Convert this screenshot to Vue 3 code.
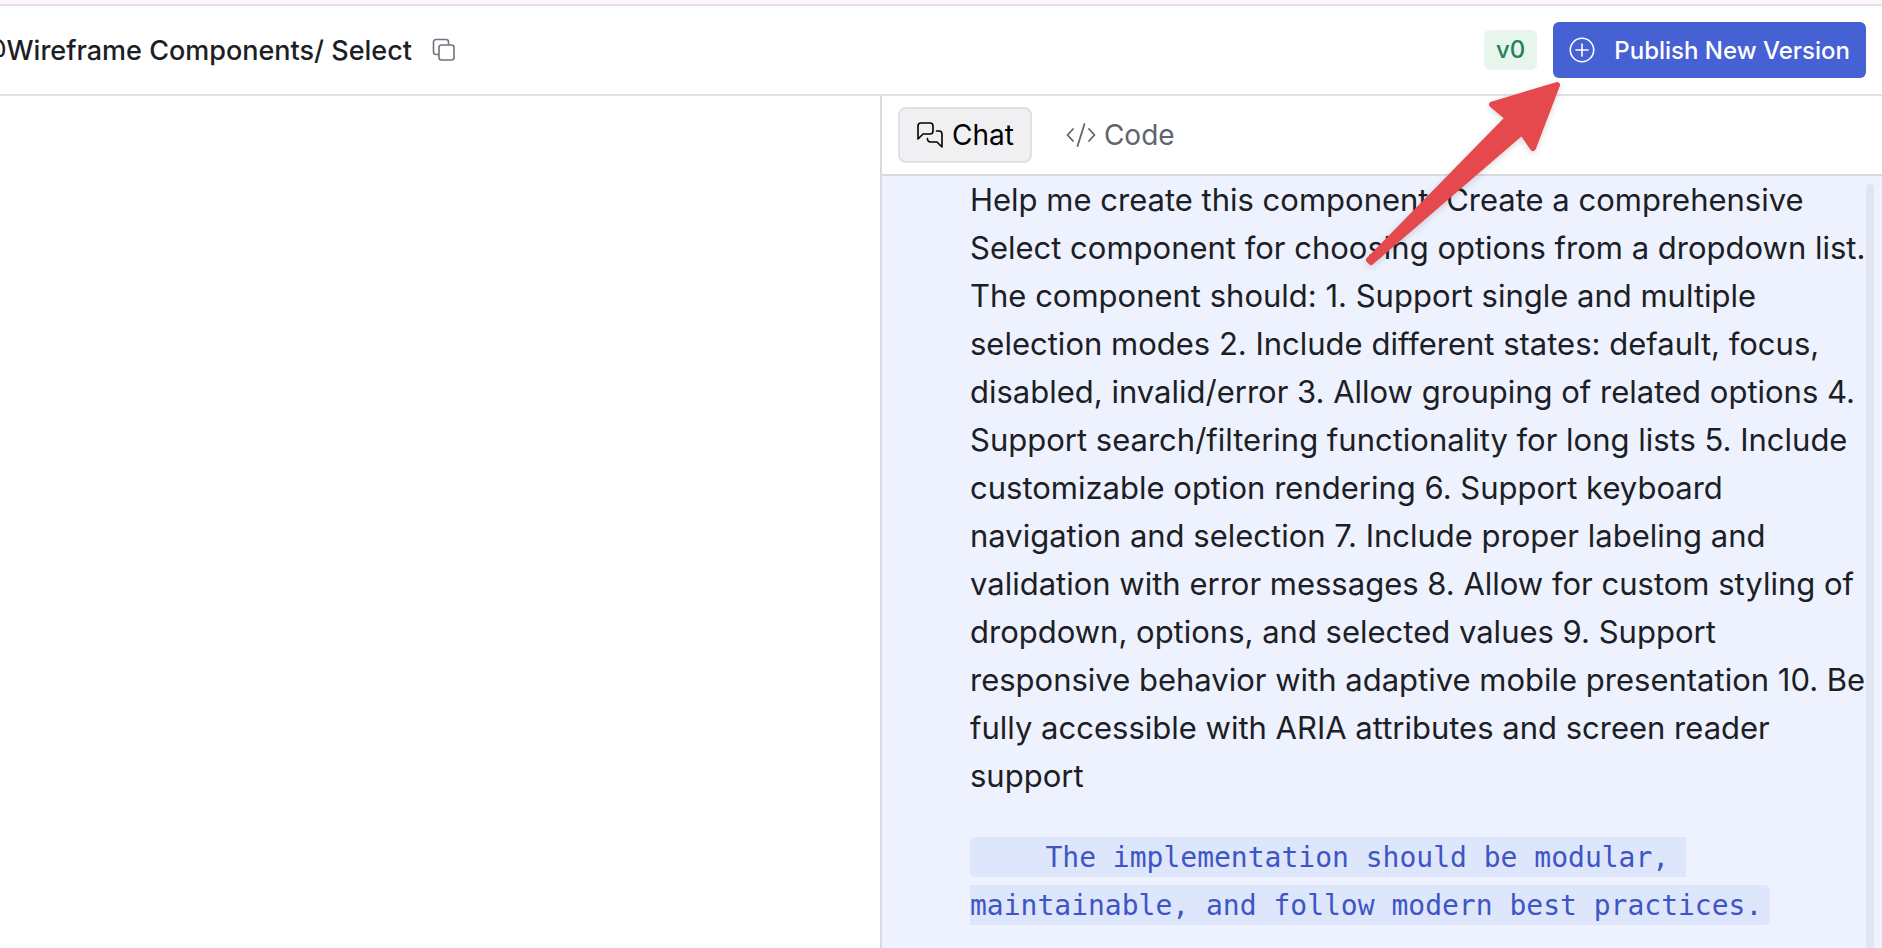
<template>
  <div class="page">
    <div class="strip"></div>
    <header class="header">
      <div class="crumb">
        <h1>@Wireframe Components/ Select</h1>
        <button class="icon-button" aria-label="Copy name">
          <svg width="24" height="24" viewBox="0 0 24 24" fill="none" stroke="currentColor" stroke-width="1.6">
            <path d="M7 16.5H4A2.5 2.5 0 0 1 1.5 14V4A2.5 2.5 0 0 1 4 1.5H14A2.5 2.5 0 0 1 16.5 4V7" />
            <rect x="7" y="7" width="15" height="15" rx="2.5" />
          </svg>
        </button>
      </div>
      <div class="actions">
        <span class="badge">{{ version }}</span>
        <button class="publish">
          <svg width="26" height="26" viewBox="0 0 26 26" fill="none" stroke="currentColor" stroke-width="1.6">
            <circle cx="13" cy="13" r="11.7" />
            <path d="M13 7V19M7 13H19" stroke-linecap="round" />
          </svg>
          <span>Publish New Version</span>
        </button>
        <svg class="arrow" width="200" height="200" viewBox="0 0 200 200">
          <path
            d="M191 7L126 26.5L142 40L3 182L5 184L156 54L167 70Z"
            fill="#e5484d"
            stroke="#e5484d"
            stroke-width="6"
            stroke-linejoin="round"
          />
        </svg>
      </div>
    </header>
    <main class="workspace">
      <section class="canvas"></section>
      <section class="panel">
        <nav class="tabs">
          <button class="tab" :class="{ active: tab === 'chat' }" @click="tab = 'chat'">
            <svg width="28" height="28" viewBox="0 0 28 28" fill="none" stroke="currentColor" stroke-width="1.6" stroke-linejoin="round" stroke-linecap="round">
              <path d="M2 18V5A3 3 0 0 1 5 2H14A3 3 0 0 1 17 5V10A3 3 0 0 1 14 13H7Z" />
              <path d="M20.5 10H23A3 3 0 0 1 26 13V26L21 21H14A3 3 0 0 1 11.5 17.5" />
            </svg>
            <span>Chat</span>
          </button>
          <button class="tab" :class="{ active: tab === 'code' }" @click="tab = 'code'">
            <svg width="30" height="28" viewBox="0 0 30 28" fill="none" stroke="currentColor" stroke-width="1.8" stroke-linejoin="round" stroke-linecap="round">
              <path d="M7 8L1.5 14L7 20M23 8L28.5 14L23 20M18.5 3L11.5 25" />
            </svg>
            <span>Code</span>
          </button>
        </nav>
        <div class="messages">
          <div class="message">
            <p>{{ prompt }}</p>
            <p><code>{{ note }}</code></p>
          </div>
          <div class="scrollbar"></div>
        </div>
      </section>
    </main>
  </div>
</template>

<script setup>
import { ref } from "vue";

const tab = ref("chat");
const version = "v0";

const prompt =
  "Help me create this component. Create a comprehensive Select component for choosing options from a dropdown list. " +
  "The component should: 1. Support single and multiple selection modes " +
  "2. Include different states: default, focus, disabled, invalid/error " +
  "3. Allow grouping of related options " +
  "4. Support search/filtering functionality for long lists " +
  "5. Include customizable option rendering " +
  "6. Support keyboard navigation and selection " +
  "7. Include proper labeling and validation with error messages " +
  "8. Allow for custom styling of dropdown, options, and selected values " +
  "9. Support responsive behavior with adaptive mobile presentation " +
  "10. Be fully accessible with ARIA attributes and screen reader support";

const note =
  "    The implementation should be modular, maintainable, and follow modern best practices.";
</script>

<style>
body {
  margin: 0;
}
</style>

<style scoped>
.page {
  display: flex;
  flex-direction: column;
  height: 100vh;
  overflow: hidden;
  background: #fff;
  color: #1c2024;
  font-family: Inter, "Liberation Sans", sans-serif;
}

button {
  font: inherit;
  cursor: pointer;
}

svg {
  flex: none;
}

.strip {
  height: 4px;
  flex: none;
  background: #fdf7fd;
  border-bottom: 2px solid #e3dfe8;
}

.header {
  display: flex;
  flex: none;
  align-items: center;
  justify-content: space-between;
  height: 88px;
  padding-right: 16px;
  border-bottom: 2px solid #e0e1e6;
}

.crumb {
  display: flex;
  align-items: center;
  gap: 20px;
  margin-left: -20px;
}

h1 {
  margin: 0;
  font-size: 27px;
  font-weight: 500;
  white-space: nowrap;
}

.icon-button {
  display: flex;
  padding: 0;
  border: 0;
  background: none;
  color: #70737c;
}

.actions {
  position: relative;
  display: flex;
  align-items: center;
  gap: 16px;
}

.badge {
  padding: 0 12px;
  border-radius: 6px;
  background: #e8f5ec;
  color: #218358;
  font-size: 24px;
  font-weight: 500;
  line-height: 40px;
}

.publish {
  display: flex;
  align-items: center;
  gap: 19px;
  height: 56px;
  padding: 0 16px;
  border: 0;
  border-radius: 6px;
  background: #4661d4;
  color: #fff;
  font-size: 24px;
  font-weight: 500;
}

/* callout pointing at the publish button */
.arrow {
  position: absolute;
  top: 56px;
  right: 300px;
  z-index: 1;
  pointer-events: none;
  filter: drop-shadow(0 2px 3px rgba(0, 0, 0, 0.15));
}

.workspace {
  display: grid;
  grid-template-columns: 880fr 1002fr;
  flex: 1;
  min-height: 0;
}

.panel {
  display: flex;
  flex-direction: column;
  min-height: 0;
  border-left: 2px solid #d9d9e0;
}

.tabs {
  display: flex;
  flex: none;
  align-items: center;
  gap: 16px;
  height: 78px;
  padding-left: 16px;
  border-bottom: 2px solid #d9d9e0;
}

.tab {
  display: flex;
  align-items: center;
  gap: 8px;
  height: 56px;
  padding: 0 16px;
  border: 2px solid transparent;
  border-radius: 8px;
  background: none;
  color: #60646c;
  font-size: 28px;
}

.tab.active {
  border-color: #e0e1e6;
  background: #f0f0f3;
  color: #000;
}

.messages {
  display: flex;
  flex: 1;
  min-height: 0;
  padding-right: 8px;
  background: #edf2fe;
}

.message {
  flex: 1;
  padding-left: 88px;
  overflow: hidden;
  font-size: 31px;
  line-height: 48px;
}

.message p {
  margin: 0 0 32px;
}

.message code {
  padding: 4px 8px 3px 8px;
  border-radius: 6px;
  background: #dde6fb;
  color: #3e56c4;
  font-family: "DejaVu Sans Mono", monospace;
  font-size: 28px;
  line-height: 40px;
  white-space: pre-wrap;
}

.scrollbar {
  flex: none;
  width: 8px;
  margin-top: 8px;
  border-radius: 4px 4px 0 0;
  background: #e0e5f1;
}
</style>
